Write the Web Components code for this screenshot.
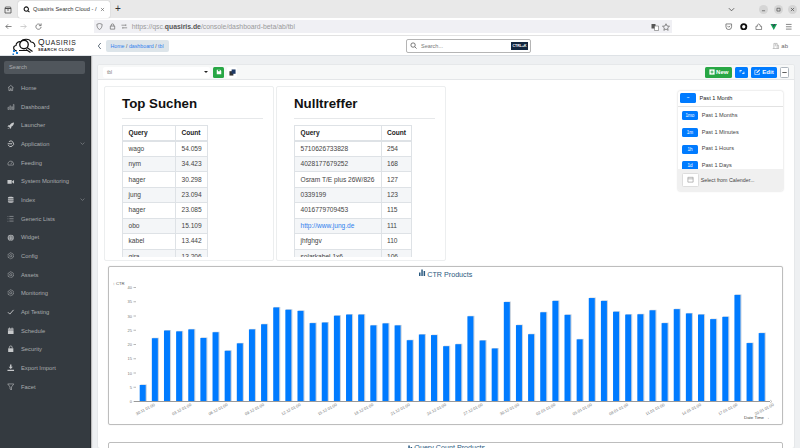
<!DOCTYPE html>
<html lang="de">
<head>
<meta charset="utf-8">
<title>Quasiris Search Cloud</title>
<style>
    html, body { margin: 0; height: 448px; overflow: hidden; background: #eef0f2; font-family: "Liberation Sans", Arial, sans-serif; }
</style>
</head>
<body>
<browser-chrome></browser-chrome>
<app-header></app-header>
<app-shell>
    <app-sidebar slot="side">
        <nav-item icon="home">Home</nav-item>
        <nav-item icon="bars">Dashboard</nav-item>
        <nav-item icon="rocket">Launcher</nav-item>
        <nav-item icon="power" more>Application</nav-item>
        <nav-item icon="gauge">Feeding</nav-item>
        <nav-item icon="video">System Monitoring</nav-item>
        <nav-item icon="database" more>Index</nav-item>
        <nav-item icon="list">Generic Lists</nav-item>
        <nav-item icon="globe">Widget</nav-item>
        <nav-item icon="gear">Config</nav-item>
        <nav-item icon="gear">Assets</nav-item>
        <nav-item icon="gear">Monitoring</nav-item>
        <nav-item icon="check">Api Testing</nav-item>
        <nav-item icon="calendar">Schedule</nav-item>
        <nav-item icon="lock">Security</nav-item>
        <nav-item icon="download">Export Import</nav-item>
        <nav-item icon="filter">Facet</nav-item>
    </app-sidebar>
    <dash-panel>
        <dash-toolbar></dash-toolbar>
        <div slot="top" style="display:contents">
            <stat-card title="Top Suchen" first="53" second="32" data="wago|54.059;nym|34.423;hager|30.298;jung|23.094;hager|23.085;obo|15.109;kabel|13.442;gira|13.206"></stat-card>
            <stat-card title="Nulltreffer" first="86.5" second="30.5" data="5710626733828|254;4028177679252|168;Osram T/E plus 26W/826|127;0339199|123;4016779709453|115;http://www.jung.de|111;jhfghgv|110;solarkabel 1x6|106"></stat-card>
            <time-picker></time-picker>
        </div>
        <bar-chart slot="charts"></bar-chart>
        <chart-stub slot="charts"></chart-stub>
    </dash-panel>
</app-shell>

<script>
const ICONS = {
    home: '<path d="M2 8l6-5 6 5M4 7v7h3v-4h2v4h3V7" fill="none" stroke="currentColor" stroke-width="1.2"/>',
    bars: '<path d="M2 14V9h2v5zM6 14V6h2v8zM10 14V8h2v6zM13.5 14V3h1.5v11z" fill="none" stroke="currentColor" stroke-width=".9"/>',
    rocket: '<path d="M15 1c-4 0-7 2-9 6H3L1 10h3l2 2v3l3-2v-3c4-2 6-5 6-9zM3 12l-2 3 3-1z" fill="currentColor"/>',
    power: '<path d="M4 3.5a6 6 0 1 1-1.6 7M1.5 8H8" fill="none" stroke="currentColor" stroke-width="2"/><circle cx="9" cy="8" r="1.5" fill="currentColor"/>',
    gauge: '<path d="M2.5 13a6 6 0 1 1 11 0zM8 11l3-4" fill="none" stroke="currentColor" stroke-width="1.1"/>',
    video: '<path d="M1 4h9v8H1zM11 7l4-3v8l-4-3z" fill="currentColor"/>',
    database: '<path d="M2 3c0-2 12-2 12 0v2.5H2zM2 6.7h12v3H2zM2 11h12v2c0 2-12 2-12 0z" fill="currentColor"/>',
    list: '<path d="M5 3h9M5 8h9M5 13h9M2 2.5v1.5M2 7.5V9M2 12.5V14" fill="none" stroke="currentColor" stroke-width="1.1"/>',
    globe: '<circle cx="8" cy="8" r="6.5" fill="currentColor"/><path d="M1.5 8h13M2.5 5h11M2.5 11h11M8 1.5c-4 4-4 9 0 13M8 1.5c4 4 4 9 0 13" fill="none" stroke="#343a40" stroke-width=".8"/>',
    gear: '<path d="M8 1.5l5.6 3.2v6.6L8 14.5l-5.6-3.2V4.700z" fill="none" stroke="currentColor" stroke-width="1.2" stroke-dasharray="2.6 .8"/><circle cx="8" cy="8" r="2.4" fill="none" stroke="currentColor"/>',
    check: '<path d="M2 9l4 4 8-9" fill="none" stroke="currentColor" stroke-width="2"/>',
    calendar: '<path d="M2 3h12v3H2zM2 7h12v8H2zM4.5 1H6v2H4.5zM10 1h1.5v2H10z" fill="currentColor"/>',
    lock: '<path d="M5 7V5a3 3 0 0 1 6 0v2" fill="none" stroke="currentColor" stroke-width="1.6"/><path d="M2.5 7h11v8h-11z" fill="currentColor"/>',
    download: '<path d="M6.5 1h3v5h3L8 10.5 3.5 6h3zM1 12h14v3H1z" fill="currentColor"/>',
    filter: '<path d="M1.5 2h13l-5 6.5V15l-3-2V8.500z" fill="none" stroke="currentColor" stroke-width="1.2"/>'
};

function svgIcon(name, size) {
    return `<svg width="${size}" height="${size}" viewBox="0 0 16 16">${ICONS[name]}</svg>`;
}

class BrowserChrome extends HTMLElement {
    constructor() {
        super();
        this.attachShadow({mode: 'open'}).innerHTML = `
            <style>
                :host { display: block; height: 36px; font-family: "Liberation Sans", Arial, sans-serif; color: #333; }
                svg { display: block; flex: none; }
                #tabs { height: 18px; background: #e9e9e9; display: flex; align-items: flex-end; padding-left: 2px; }
                #box { width: 12px; height: 16px; display: flex; align-items: center; justify-content: center; margin-right: 4px; }
                #tab { width: 92px; height: 16.5px; margin-bottom: .5px; box-sizing: border-box; background: #fff; border-radius: 2px; box-shadow: 0 0 1px #999; display: flex; align-items: center; padding: 0 5px; gap: 3px; font-size: 5.7px; white-space: nowrap; }
                #tab span { flex: 1; }
                #plus { margin: 0 0 3px 2px; font-size: 10px; line-height: 12px; width: 12px; text-align: center; }
                #win { margin-left: auto; height: 18px; display: flex; align-items: center; gap: 5.3px; padding-right: 3px; }
                #win i { width: 9px; height: 9px; border-radius: 50%; background: #d5d5d5; display: flex; align-items: center; justify-content: center; }
                #nav { height: 17px; background: #fff; border-bottom: 1px solid #e2e2e2; display: flex; align-items: center; padding-left: 5px; }
                #url { width: 578px; height: 13px; margin-left: 52.5px; background: #f0f0f4; display: flex; align-items: center; padding-left: 2.2px; box-sizing: border-box; font-size: 6.85px; color: #9a9a9a; gap: 5.5px; white-space: nowrap; }
                #url span { margin-left: -2px; }
                #url b { color: #555; font-weight: 700; }
                #url .end { margin-left: auto; display: flex; gap: 3.5px; padding-right: 2px; }
                #tools { display: flex; gap: 7.5px; margin-left: 53px; }
            </style>
            <div id="tabs">
                <div id="box"><svg width="8" height="8" viewBox="0 0 16 16"><path d="M2 5h12v9H2zM3 2h10l1 3H2zM6 8h4" fill="none" stroke="#444" stroke-width="1.5"/></svg></div>
                <div id="tab">
                    <svg width="7" height="7" viewBox="0 0 16 16"><circle cx="7.5" cy="7" r="5" fill="none" stroke="#111" stroke-width="2.4"/><path d="M11 11l4 3" stroke="#111" stroke-width="2.4"/></svg>
                    <span>Quasiris Search Cloud - /</span><svg width="5" height="5" viewBox="0 0 16 16"><path d="M3 3l10 10M13 3L3 13" stroke="#555" stroke-width="1.8"/></svg>
                </div>
                <div id="plus">+</div>
                <div id="win">
                    <svg width="7" height="7" viewBox="0 0 16 16" style="margin-right:19px"><path d="M2 5l6 6 6-6" fill="none" stroke="#555" stroke-width="2"/></svg>
                    <i><svg width="5" height="5" viewBox="0 0 16 16"><path d="M3 12h10" stroke="#444" stroke-width="2"/></svg></i>
                    <i><svg width="5" height="5" viewBox="0 0 16 16"><path d="M3 4h10v9H3z" fill="none" stroke="#444" stroke-width="2"/></svg></i>
                    <i><svg width="5" height="5" viewBox="0 0 16 16"><path d="M3 3l10 10M13 3L3 13" stroke="#444" stroke-width="2"/></svg></i>
                </div>
            </div>
            <div id="nav">
                <svg width="7" height="7" viewBox="0 0 16 16" style="margin-right:7.5px"><path d="M15 8H2M7 3L2 8l5 5" fill="none" stroke="#555" stroke-width="1.6"/></svg>
                <svg width="7" height="7" viewBox="0 0 16 16" style="margin-right:8px"><path d="M1 8h13M9 3l5 5-5 5" fill="none" stroke="#bbb" stroke-width="1.6"/></svg>
                <svg width="7" height="7" viewBox="0 0 16 16"><path d="M13 5a6 6 0 1 0 1 4M14 1v5H9" fill="none" stroke="#555" stroke-width="1.6"/></svg>
                <div id="url">
                    <svg width="7" height="7" viewBox="0 0 16 16"><path d="M8 1l6 2c0 6-2 10-6 12C4 13 2 9 2 3z" fill="none" stroke="#555" stroke-width="1.4"/></svg>
                    <svg width="7" height="7" viewBox="0 0 16 16"><path d="M5 7V5a3 3 0 0 1 6 0v2M3 7h10v7H3z" fill="none" stroke="#555" stroke-width="1.4"/></svg>
                    <svg width="7" height="7" viewBox="0 0 16 16"><path d="M1 5h10M14 11H4M11 3v4M4 9v4" fill="none" stroke="#777" stroke-width="1.6"/></svg>
                    <span>https://qsc.<b>quasiris.de</b>/console/dashboard-beta/ab/tbl</span>
                    <div class="end">
                        <svg width="8" height="8" viewBox="0 0 16 16"><path d="M1 2h8v9H1z" fill="#555"/><path d="M7 6h8v9H7z" fill="#fff" stroke="#555"/></svg>
                        <svg width="8" height="8" viewBox="0 0 16 16"><path d="M8 1.5l2 4.5 5 .5-3.7 3.3 1 4.8L8 12.200 3.700 14.600l1-4.800L1 6.500 6 6z" fill="none" stroke="#555" stroke-width="1.3"/></svg>
                    </div>
                </div>
                <div id="tools">
                    <svg width="7.5" height="7.5" viewBox="0 0 16 16"><path d="M2 2h12v6a6 6 0 0 1-12 0zM5 6l3 3 3-3" fill="none" stroke="#555" stroke-width="1.5"/></svg>
                    <svg width="7.5" height="7.5" viewBox="0 0 16 16"><circle cx="8" cy="8" r="5.5" fill="none" stroke="#111" stroke-width="4"/></svg>
                    <svg width="7.5" height="7.5" viewBox="0 0 16 16"><path d="M2 7h3V4l3-2 3 2v3h3v7H2z" fill="none" stroke="#555" stroke-width="1.4"/></svg>
                    <svg width="7.5" height="7.5" viewBox="0 0 16 16"><path d="M1 2h5l2 4 2-4h5L8 15z" fill="#18a058"/><path d="M5 2h2.5L8 4l.5-2H11L8 8z" fill="#234"/></svg>
                    <svg width="7.5" height="7.5" viewBox="0 0 16 16"><path d="M2 3h12M2 8h12M2 13h12" stroke="#555" stroke-width="1.5"/></svg>
                </div>
            </div>`;
    }
}
customElements.define('browser-chrome', BrowserChrome);

class AppHeader extends HTMLElement {
    constructor() {
        super();
        this.attachShadow({mode: 'open'}).innerHTML = `
            <style>
                :host { display: flex; align-items: center; height: 20px; box-sizing: border-box; background: #fff; border-bottom: 1px solid #dee2e6; font-family: "Liberation Sans", Arial, sans-serif; }
                svg { display: block; flex: none; }
                #logo { width: 96px; flex: none; display: flex; align-items: center; padding-left: 11px; box-sizing: border-box; gap: 1px; }
                #name { color: #1a1a1a; white-space: nowrap; }
                #name div:first-child { font-size: 6.8px; line-height: 7px; letter-spacing: .55px; }
                #name div:first-child::first-letter { font-size: 8.5px; }
                #name div:last-child { font-size: 3.9px; line-height: 4px; font-weight: 700; letter-spacing: .42px; margin-top: 1.5px; }
                #crumb { margin-left: 3px; width: 63px; height: 12px; box-sizing: border-box; background: #dde5ea; border-radius: 2px; font-size: 5.25px; line-height: 12px; padding-left: 4.5px; color: #555; white-space: nowrap; }
                #crumb a { color: #2f80ed; }
                #search { margin-left: 237px; width: 125px; height: 14px; box-sizing: border-box; border: 1px solid #b5b5b5; border-radius: 2px; display: flex; align-items: center; padding: 0 2px 0 2.5px; gap: 4.5px; font-size: 5.5px; color: #777; }
                #search kbd { margin-left: auto; background: #12263f; color: #fff; font: 700 3.5px "Liberation Sans", Arial, sans-serif; padding: 2px 1.5px; width: 17px; box-sizing: border-box; text-align: center; white-space: nowrap; }
                #user { margin-left: auto; padding-right: 12px; display: flex; align-items: center; gap: 1.5px; font-size: 6px; color: #666; }
            </style>
            <div id="logo">
                <svg width="26" height="18" viewBox="0 0 52 36">
                    <path d="M12 28C4 28 3 18 10 17c0-6 6-9 10-7 3-7 17-8 20 0 7 0 9 7 7 10" fill="none" stroke="#111" stroke-width="2.2"/>
                    <circle cx="26" cy="15" r="8.5" fill="#fff" stroke="#111" stroke-width="2.6"/>
                    <path d="M32 21l11 8M30 25l9 6M16 27h16" stroke="#111" stroke-width="2.4" fill="none"/>
                    <path d="M4 26h4v4H4zM10 30h4v4h-4zM3 33h3v3H3z" fill="#1c7fd8"/>
                </svg>
                <div id="name"><div>QUASIRIS</div><div>SEARCH CLOUD</div></div>
            </div>
            <svg width="7" height="8" viewBox="0 0 8 16"><path d="M6.5 2L1.5 8l5 6" fill="none" stroke="#345" stroke-width="1.5"/></svg>
            <div id="crumb"><a>Home</a> / <a>dashboard</a> / <a>tbl</a></div>
            <div id="search">
                <svg width="7" height="7" viewBox="0 0 16 16"><circle cx="7" cy="7" r="5" fill="none" stroke="#555" stroke-width="1.8"/><path d="M11 11l4 4" stroke="#555" stroke-width="1.8"/></svg>
                <span>Search...</span><kbd>CTRL+K</kbd>
            </div>
            <div id="user">
                <svg width="7.5" height="7.5" viewBox="0 0 16 16"><path d="M4 14V3h7v11M1.5 14h13M11 7h3v7M6 5.5h3M6 8h3" fill="none" stroke="#999" stroke-width="1.2"/></svg>
                <span>ab</span>
            </div>`;
    }
}
customElements.define('app-header', AppHeader);

class AppShell extends HTMLElement {
    constructor() {
        super();
        this.attachShadow({mode: 'open'}).innerHTML = `
            <style>
                :host { display: flex; height: 392px; overflow: hidden; background: #eef0f2; }
            </style>
            <slot name="side"></slot>
            <slot></slot>`;
    }
}
customElements.define('app-shell', AppShell);

class AppSidebar extends HTMLElement {
    constructor() {
        super();
        this.attachShadow({mode: 'open'}).innerHTML = `
            <style>
                :host { display: block; flex: none; width: 91px; box-sizing: border-box; background: #343a40; border-right: 1px solid #2a2e32; padding-top: 5px; box-shadow: 1px 0 1px #bbb; font-family: "Liberation Sans", Arial, sans-serif; }
                #search { margin: 0 5px 4.7px 4px; height: 13px; background: #50565c; border-radius: 2px; color: #a9acaf; font-size: 5.7px; line-height: 13px; padding-left: 5px; }
            </style>
            <div id="search">Search</div>
            <slot></slot>`;
    }
}
customElements.define('app-sidebar', AppSidebar);

class NavItem extends HTMLElement {
    constructor() {
        super();
        this.attachShadow({mode: 'open'}).innerHTML = `
            <style>
                :host { display: flex; align-items: center; height: 18.67px; color: #a9acaf; font-size: 5.8px; white-space: nowrap; }
                #icon { width: 21px; flex: none; display: flex; justify-content: center; padding-left: .5px; box-sizing: border-box; color: #c6c8ca; }
                svg { display: block; }
                #more { margin-left: auto; margin-right: 5px; }
            </style>
            <div id="icon"></div>
            <slot></slot>
            <svg id="more" width="5" height="5" viewBox="0 0 16 16"><path d="M2 5l6 6 6-6" fill="none" stroke="#9a9da0" stroke-width="1.8"/></svg>`;
    }

    connectedCallback() {
        this.shadowRoot.querySelector('#icon').innerHTML = svgIcon(this.getAttribute('icon'), 7.5);
        if(!this.hasAttribute('more')) {
            this.shadowRoot.querySelector('#more').style.display = 'none';
        }
    }
}
customElements.define('nav-item', NavItem);

class DashPanel extends HTMLElement {
    constructor() {
        super();
        this.attachShadow({mode: 'open'}).innerHTML = `
            <style>
                :host { display: block; flex: none; width: 696px; margin: 9px 0 0 7px; background: #fff; border-radius: 2px; box-shadow: 0 0 0 1px #e6e8ea; font-family: "Liberation Sans", Arial, sans-serif; }
                #top { display: flex; align-items: flex-start; gap: 2px; padding: 6px 11px 0 6px; height: 175px; }
                #charts { padding: 5px 11px 0 10px; display: flex; flex-direction: column; gap: 17px; }
            </style>
            <slot></slot>
            <div id="top"><slot name="top"></slot></div>
            <div id="charts"><slot name="charts"></slot></div>`;
    }
}
customElements.define('dash-panel', DashPanel);

class DashToolbar extends HTMLElement {
    constructor() {
        super();
        this.attachShadow({mode: 'open'}).innerHTML = `
            <style>
                :host { display: flex; align-items: center; height: 15px; box-sizing: border-box; padding: 0 5px; background: #f7f8f8; border-bottom: 1px solid #e4e6e8; border-radius: 2px 2px 0 0; font-size: 6.2px; }
                svg { display: block; }
                #select { width: 107px; height: 11px; box-sizing: border-box; background: #fff; border-radius: 2px; color: #777; font-size: 4.8px; display: flex; align-items: center; justify-content: space-between; padding: 0 2px 0 4px; }
                #select i { border: 2px solid transparent; border-top: 2.2px solid #222; border-bottom: 0; }
                button { height: 11px; box-sizing: border-box; border: 0; border-radius: 1.5px; padding: 0; display: flex; align-items: center; justify-content: center; gap: 1.5px; font: 700 6px "Liberation Sans", Arial, sans-serif; color: #fff; }
                .green { background: #28a745; }
                .blue { background: #007bff; }
                #save { width: 11px; margin-left: 3px; }
                #copy { width: 10px; margin-left: 3px; background: #fff; }
                #new { width: 27px; margin-left: auto; }
                #sync { width: 13px; margin-left: 3px; }
                #edit { width: 26px; margin-left: 3px; }
                #min { width: 9px; margin-left: 3px; background: #fff; border: 1px solid #adb5bd; }
            </style>
            <div id="select"><span>tbl</span><i></i></div>
            <button id="save" class="green"><svg width="6" height="6" viewBox="0 0 16 16"><path d="M2 2h9l3 3v9H2z" fill="#fff"/><path d="M5 2h5v4H5z" fill="#28a745"/></svg></button>
            <button id="copy"><svg width="7" height="7" viewBox="0 0 16 16"><path d="M1 5h9v10H1z" fill="#333"/><path d="M6 1h9v10H6z" fill="#1f3a66"/></svg></button>
            <button id="new" class="green"><svg width="6" height="6" viewBox="0 0 16 16"><path d="M1 1h14v14H1z" fill="#fff"/><path d="M8 4v8M4 8h8" stroke="#28a745" stroke-width="2.4"/></svg>New</button>
            <button id="sync" class="blue"><svg width="6" height="6" viewBox="0 0 16 16"><path d="M3 9V4h5M1 6l2-2.5L5 6M13 7v5H8M15 10l-2 2.5L11 10" fill="none" stroke="#fff" stroke-width="1.8"/></svg></button>
            <button id="edit" class="blue"><svg width="6.5" height="6.5" viewBox="0 0 16 16"><path d="M13 9v5H2V3h6" fill="none" stroke="#fff" stroke-width="1.6"/><path d="M6 8l7-7 2 2-7 7H6z" fill="#fff"/></svg>Edit</button>
            <button id="min"><svg width="5" height="5" viewBox="0 0 16 16"><path d="M1 8h14" stroke="#555" stroke-width="3"/></svg></button>`;
    }
}
customElements.define('dash-toolbar', DashToolbar);

class StatCard extends HTMLElement {
    constructor() {
        super();
        const shadowRoot = this.attachShadow({mode: 'open'});
        shadowRoot.innerHTML = `
            <style>
                :host { display: block; flex: none; width: 170px; height: 175px; box-sizing: border-box; border: 1px solid #eceeef; border-radius: 2px; padding: 9px 10px 0 17px; overflow: hidden; background: #fff; }
                h2 { margin: 0; font-size: 13.3px; line-height: 16px; color: #111; }
                hr { margin: 6px 0 6px; border: 0; border-top: 1px solid #e6e8ea; }
                #clip { height: 132px; overflow: hidden; }
                table { border-collapse: collapse; font-size: 6.6px; color: #444; table-layout: fixed; }
                th, td { box-sizing: border-box; border: 1px solid #dee2e6; padding: 0 0 0 5.5px; height: 15.45px; line-height: 8px; text-align: left; white-space: nowrap; overflow: hidden; }
                th { height: 15.5px; color: #222; border-bottom-width: 2px; }
                tr:nth-child(even) td { background: #f4f6f8; }
                a { color: #2f80ed; }
            </style>
            <h2></h2><hr>
            <div id="clip"><table><colgroup><col id="c1"><col id="c2"></colgroup><thead><tr><th>Query</th><th>Count</th></tr></thead><tbody></tbody></table></div>`;
    }

    connectedCallback() {
        const root = this.shadowRoot;
        root.querySelector('h2').textContent = this.getAttribute('title');
        root.querySelector('#c1').style.width = `${this.getAttribute('first')}px`;
        root.querySelector('#c2').style.width = `${this.getAttribute('second')}px`;
        const tbody = root.querySelector('tbody');
        this.getAttribute('data').split(';').forEach(entry => {
            const [query, count] = entry.split('|');
            const row = tbody.insertRow();
            const cell = row.insertCell();
            if(query.startsWith('http')) {
                const link = document.createElement('a');
                link.textContent = query;
                cell.appendChild(link);
            }
            else {
                cell.textContent = query;
            }
            row.insertCell().textContent = count;
        });
    }
}
customElements.define('stat-card', StatCard);

class TimePicker extends HTMLElement {
    constructor() {
        super();
        const rows = [['1mo', 'Past 1 Months'], ['1m', 'Past 1 Minutes'], ['1h', 'Past 1 Hours'], ['1d', 'Past 1 Days']];
        this.attachShadow({mode: 'open'}).innerHTML = `
            <style>
                :host { display: block; flex: none; width: 105px; margin: 4.5px 0 0 auto; background: #fff; border-radius: 2px; box-shadow: 0 0 2px #c4c4c4; font-size: 5.6px; color: #444; }
                #head { height: 16px; box-sizing: border-box; display: flex; align-items: center; gap: 3.5px; padding-left: 2px; color: #222; border-bottom: 1px solid #e2e2e2; }
                #head b { width: 16px; height: 10.5px; line-height: 10.5px; }
                b { display: block; flex: none; width: 16.5px; height: 9px; border-radius: 1.5px; background: #007bff; color: #fff; font-weight: 400; font-size: 4.6px; line-height: 9px; text-align: center; }
                #list { height: 62px; overflow: hidden; padding: 1px 0 0 3.7px; box-sizing: border-box; }
                #list div { height: 16.7px; display: flex; align-items: center; gap: 3.5px; }
                #list span { margin-top: -2px; }
                #foot { height: 22.5px; background: #f0f0f0; display: flex; align-items: center; gap: 2px; padding-left: 3.7px; font-size: 5.3px; border-radius: 0 0 2px 2px; }
                #cal { width: 17px; height: 14.5px; box-sizing: border-box; background: #fff; border: 1px solid #ddd; border-radius: 1.5px; display: flex; align-items: center; justify-content: center; }
                svg { display: block; }
            </style>
            <div id="head"><b>~</b><span>Past 1 Month</span></div>
            <div id="list">${rows.map(r => `<div><b>${r[0]}</b><span>${r[1]}</span></div>`).join('')}</div>
            <div id="foot"><div id="cal"><svg width="7" height="7" viewBox="0 0 16 16"><path d="M2 3h12v11H2zM2 6.5h12" fill="none" stroke="#888" stroke-width="1.3"/></svg></div><span>Select from Calender...</span></div>`;
    }
}
customElements.define('time-picker', TimePicker);

const CTR_VALUES = [5.8, 22.2, 24.9, 24.6, 25.3, 22.3, 24.3, 17.8, 20.4, 25.3, 27.1, 33, 32.2, 31.8, 27.5, 27.7, 30.1, 30.5, 30.5, 26.7, 27.4, 26.7,
    21.5, 23.5, 23.3, 19.4, 20.1, 29.9, 21.4, 18.6, 34.9, 26.8, 23.6, 31.3, 35.3, 30.4, 21.8, 36.3, 35.3, 31.5, 30.5, 30.6, 32, 27.5, 32.4, 30.9, 30.5, 28.9, 29.7, 37.4, 20.5, 24];
const CTR_LABELS = ['30.11', '03.12', '06.12', '09.12', '12.12', '15.12', '18.12', '21.12', '24.12', '27.12', '30.12', '02.01', '05.01', '08.01', '11.01', '14.01', '17.01', '20.01'];

class BarChart extends HTMLElement {
    constructor() {
        super();
        this.attachShadow({mode: 'open'}).innerHTML = `
            <style>
                :host { display: block; height: 159px; box-sizing: border-box; border: 1px solid #bdbdbd; border-radius: 2px; box-shadow: 0 0 1px #ccc; }
                svg { display: block; font-family: "Liberation Sans", Arial, sans-serif; }
            </style>
            <svg width="673" height="157" viewBox="0 0 673 157"></svg>`;
    }

    connectedCallback() {
        const baseY = 134.5, unit = 2.85, firstX = 33.7, step = 12.137;
        let out = `<text x="318.3" y="9.5" font-size="7.17" fill="#2b5a80">CTR Products</text>
            <path d="M310 9V5.5h1.5V9zM312.3 9V2.5h1.5V9zM314.6 9V4h1.5v5z" fill="#2b5a80"/>
            <text x="3.7" y="17.5" font-size="4.2" fill="#555">↑ CTR</text>`;
        for(let tick = 0; tick <= 40; tick += 5) {
            const y = baseY - tick * unit;
            out += `<text x="23" y="${y + 1.5}" font-size="4" fill="#777" text-anchor="end">${tick}</text><path d="M24.5 ${y}h2.5" stroke="#888" stroke-width=".6"/>`;
        }
        CTR_VALUES.forEach((value, i) => {
            const x = firstX + i * step, h = value * unit;
            out += `<rect x="${x - 2.2}" y="${baseY - h - .5}" width="6.3" height="${h + .5}" fill="#c9d3de"/>`;
            out += `<rect x="${x - 3}" y="${baseY - h}" width="6" height="${h}" fill="#007bff"/>`;
        });
        out += `<path d="M25 ${baseY}H661" stroke="#999" stroke-width="1"/><path d="M661 ${baseY - 1.5}l2 1.5-2 1.5" fill="none" stroke="#999" stroke-width=".5"/>`;
        CTR_LABELS.forEach((label, i) => {
            const x = firstX + 3.2 + i * 3 * step;
            out += `<text transform="translate(${x} 143.5) rotate(-28)" font-size="4" fill="#777" text-anchor="middle">${label} 01:00</text>`;
        });
        out += `<text x="635" y="151.5" font-size="4.4" fill="#444">Date Time →</text>`;
        this.shadowRoot.querySelector('svg').innerHTML = out;
    }
}
customElements.define('bar-chart', BarChart);

class ChartStub extends HTMLElement {
    constructor() {
        super();
        this.attachShadow({mode: 'open'}).innerHTML = `
            <style>
                :host { display: flex; justify-content: center; align-items: flex-start; gap: 1.5px; height: 60px; box-sizing: border-box; border: 1px solid #bdbdbd; border-radius: 2px; padding-top: 1px; font-size: 7.17px; line-height: 9px; color: #2b5a80; }
                svg { display: block; margin-top: 1px; }
            </style>
            <svg width="7" height="7" viewBox="0 0 7 7"><path d="M0 7V3.5h1.5V7zM2.3 7V.5h1.5V7zM4.6 7V2h1.5v5z" fill="#2b5a80"/></svg>
            <span>Query Count Products</span>`;
    }
}
customElements.define('chart-stub', ChartStub);
</script>
</body>
</html>
